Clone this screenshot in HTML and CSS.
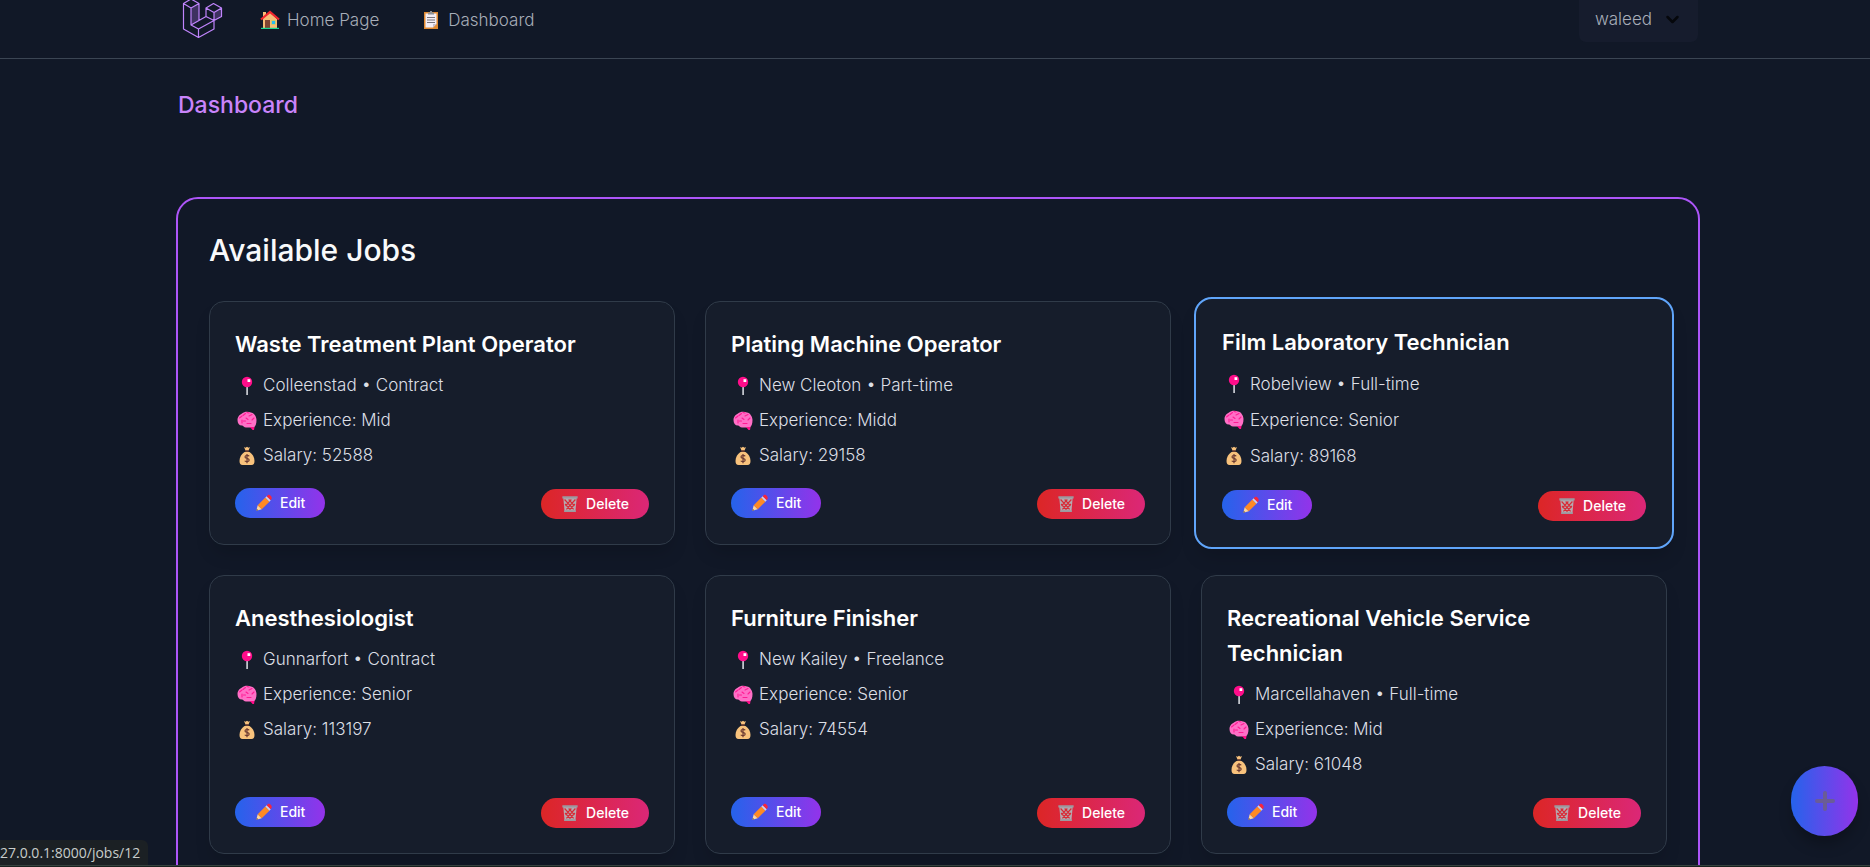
FILE: index.html
```html
<!DOCTYPE html>
<html lang="en">
<head>
<meta charset="utf-8">
<title>Dashboard</title>
<link rel="stylesheet" href="styles.css">
</head>
<body>
<svg class="sprite" aria-hidden="true">
  <symbol id="house" viewBox="0 0 20 20">
    <path fill="#f7bd78" d="M3 2h3v4l4-3.500L17 9v9H3z"/>
    <path fill="none" stroke="#f2252d" stroke-width="2.200" d="M1 9.500 10 2l9 7.500"/>
    <path fill="#7d4533" d="M5 10h5v8H5z"/>
    <path fill="#26bdf2" stroke="#f5d33c" stroke-width=".6" d="M11.500 10.500h4v4h-4z"/>
    <path fill="#16d890" d="M1 17.800h18V19H1z"/>
  </symbol>
  <symbol id="clipboard" viewBox="0 0 20 20">
    <path fill="#e08a32" d="M3 2h14v17H3z"/>
    <path fill="#f3eef6" d="M4.500 3.500h11V14L12 17.500H4.500z"/>
    <path fill="#c3bccb" d="M12 17.500V14h3.500z"/>
    <path fill="#8e9196" d="M7 2.500h2V1h2v1.500h2v2H7z"/>
    <path fill="none" stroke="#77747d" d="M6 7.500h8M6 10h8M6 12.500h8"/>
  </symbol>
  <symbol id="pin" viewBox="0 0 20 20">
    <path fill="#d5d7de" d="M9.300 9h1.600v10H9.300z"/>
    <circle cx="10" cy="6" r="5.200" fill="#ff0d8a"/>
    <path fill="#fff" d="M10.500 3.200h2.800V6h-2.800z"/>
  </symbol>
  <symbol id="brain" viewBox="0 0 20 20">
    <path fill="#ff6fc6" d="M.5 9C.5 5.500 3 3.500 5 2.500 7 .5 11 0 14 1.500c3 0 5.500 4.500 5.500 7.500 0 4-1 6-2.500 7.500H9c-2 0-3-2-4-2-3 0-4.500-2-4.500-5.500z"/>
    <path fill="#ff0d8a" d="M13 16h4.500l-.5 3h-1.500z"/>
    <path fill="none" stroke="#ff1d94" stroke-width="1.100" stroke-linecap="round" d="M2.500 7 5 5M5 9v3M6 4.500l2.500-2M10 1.500l2 .5M9 7l2 1.500M12 5l3-1.500M10 12.500h4M15 9l2-2M6.500 10h2"/>
  </symbol>
  <symbol id="bag" viewBox="0 0 20 20">
    <path fill="#f8c27c" d="M7 1l1.500.8L10 .7l1.500 1.100L13 1l-1.500 3.500h-3z"/>
    <path fill="#7a4634" d="M8.300 4.300h3.400v1.500H8.300z"/>
    <path fill="#f8c27c" d="M7.500 6h5c3 2 5 5 5 9 0 2.500-1 4-3 4h-9c-2 0-3-1.500-3-4 0-4 2-7 5-9z"/>
    <path fill="none" stroke="#6d3b32" stroke-width="1.200" d="M12.200 10.300C11.500 9.200 8 9 8 10.900s4.200 1.200 4.200 3.100S8.500 16 7.800 14.800M10 8v9.300"/>
  </symbol>
  <symbol id="pencil" viewBox="0 0 20 20">
    <path fill="#ffd79c" d="M1.500 18.500 3 12.500l4.500 4.500z"/>
    <path fill="#5d4a45" d="m1.500 18.500.5-2 1.500 1.500z"/>
    <path fill="#ff8a24" d="m3 12.500 8.500-8.500L16 8.500 7.500 17z"/>
    <path fill="#d6d4e4" d="m11.500 4 1.500-1.500L17.500 7 16 8.500z"/>
    <path fill="#f8253c" d="m13 2.500 1.500-1.500c2-.5 4.500 2 4 4L17.500 7z"/>
  </symbol>
  <symbol id="trash" viewBox="0 0 20 20">
    <path fill="#b5aab0" d="M2.500 2.500h15l-1.500 16H4z"/>
    <path fill="none" stroke="#d92b36" stroke-width="1.300" d="m4 5 10 11M8.500 5 15 12M4.500 10l5.500 6M16 5 6 16M11.500 5 5 12M15.500 10 10 16"/>
    <path fill="#9d999f" d="M1.500 1.500h17V4h-17zM3.500 17h13v2h-13z"/>
  </symbol>
</svg>

<nav class="nav">
  <div class="container nav-row">
    <a class="logo" href="#" aria-label="Laravel">
      <svg viewBox="4 -2 41 41" fill="none" stroke="#c084fc" stroke-width="1.200" stroke-linejoin="round">
        <path fill="#6b4a9a" fill-opacity=".5" stroke="none" d="M13 8l8-4.500V21l-8 4zM36 12.500 43.500 8v8.500L36 21z"/>
        <path d="M5.500 3.500 13-1l8 4.500L13 8zM5.500 3.500V29l15 8.500L36 29v-8.500M13 8v17l7.500 4v8.500M21 3.500V21M13 25l15-8.500M20.500 29 36 20.500M28 8l7.500-4.500L43.500 8 36 12.500zM28 8v8.500l8 4 7.500-4V8M36 12.500v8"/>
      </svg>
    </a>
    <a class="nav-link" href="#"><svg class="icon"><use href="#house"/></svg>Home Page</a>
    <a class="nav-link" href="#"><svg class="icon"><use href="#clipboard"/></svg>Dashboard</a>
    <button class="user" type="button">waleed
      <svg class="chevron" viewBox="0 0 12 12" fill="none" stroke="#05070b" stroke-width="2" stroke-linecap="round" stroke-linejoin="round"><path d="m2 4 4 4 4-4"/></svg>
    </button>
  </div>
</nav>

<header class="container page-head"><h1>Dashboard</h1></header>

<main class="container panel">
  <h2>Available Jobs</h2>
  <div class="grid">
    <article class="card">
      <h3>Waste Treatment Plant Operator</h3>
      <p><svg class="icon"><use href="#pin"/></svg>Colleenstad • Contract</p>
      <p><svg class="icon"><use href="#brain"/></svg>Experience: Mid</p>
      <p><svg class="icon"><use href="#bag"/></svg>Salary: 52588</p>
      <div class="actions">
        <a class="btn edit" href="#"><svg><use href="#pencil"/></svg>Edit</a>
        <button class="btn delete" type="button"><svg><use href="#trash"/></svg>Delete</button>
      </div>
    </article>
    <article class="card">
      <h3>Plating Machine Operator</h3>
      <p><svg class="icon"><use href="#pin"/></svg>New Cleoton • Part-time</p>
      <p><svg class="icon"><use href="#brain"/></svg>Experience: Midd</p>
      <p><svg class="icon"><use href="#bag"/></svg>Salary: 29158</p>
      <div class="actions">
        <a class="btn edit" href="#"><svg><use href="#pencil"/></svg>Edit</a>
        <button class="btn delete" type="button"><svg><use href="#trash"/></svg>Delete</button>
      </div>
    </article>
    <article class="card active">
      <h3>Film Laboratory Technician</h3>
      <p><svg class="icon"><use href="#pin"/></svg>Robelview • Full-time</p>
      <p><svg class="icon"><use href="#brain"/></svg>Experience: Senior</p>
      <p><svg class="icon"><use href="#bag"/></svg>Salary: 89168</p>
      <div class="actions">
        <a class="btn edit" href="#"><svg><use href="#pencil"/></svg>Edit</a>
        <button class="btn delete" type="button"><svg><use href="#trash"/></svg>Delete</button>
      </div>
    </article>
    <article class="card">
      <h3>Anesthesiologist</h3>
      <p><svg class="icon"><use href="#pin"/></svg>Gunnarfort • Contract</p>
      <p><svg class="icon"><use href="#brain"/></svg>Experience: Senior</p>
      <p><svg class="icon"><use href="#bag"/></svg>Salary: 113197</p>
      <div class="actions">
        <a class="btn edit" href="#"><svg><use href="#pencil"/></svg>Edit</a>
        <button class="btn delete" type="button"><svg><use href="#trash"/></svg>Delete</button>
      </div>
    </article>
    <article class="card">
      <h3>Furniture Finisher</h3>
      <p><svg class="icon"><use href="#pin"/></svg>New Kailey • Freelance</p>
      <p><svg class="icon"><use href="#brain"/></svg>Experience: Senior</p>
      <p><svg class="icon"><use href="#bag"/></svg>Salary: 74554</p>
      <div class="actions">
        <a class="btn edit" href="#"><svg><use href="#pencil"/></svg>Edit</a>
        <button class="btn delete" type="button"><svg><use href="#trash"/></svg>Delete</button>
      </div>
    </article>
    <article class="card">
      <h3>Recreational Vehicle Service Technician</h3>
      <p><svg class="icon"><use href="#pin"/></svg>Marcellahaven • Full-time</p>
      <p><svg class="icon"><use href="#brain"/></svg>Experience: Mid</p>
      <p><svg class="icon"><use href="#bag"/></svg>Salary: 61048</p>
      <div class="actions">
        <a class="btn edit" href="#"><svg><use href="#pencil"/></svg>Edit</a>
        <button class="btn delete" type="button"><svg><use href="#trash"/></svg>Delete</button>
      </div>
    </article>
  </div>
</main>

<button class="fab" type="button" aria-label="Add job">
  <svg viewBox="0 0 20 20" fill="none" stroke="#6a5c97" stroke-width="4" stroke-linecap="round"><path d="M10 2v16M2 10h16"/></svg>
</button>
<div class="status">27.0.0.1:8000/jobs/12</div>
<div class="edge"></div>
</body>
</html>
```
FILE: styles.css
```css
* { box-sizing: border-box; }

body {
  margin: 0;
  padding-left: 6px;
  height: 100vh;
  overflow: hidden;
  background: #111827;
  color: #fff;
  font-family: Inter, "Liberation Sans", sans-serif;
  font-size: 17px;
  font-weight: 300;
}

h1, h2, h3, p { margin: 0; }
a { color: inherit; text-decoration: none; }
button { border: 0; font: inherit; color: inherit; cursor: pointer; }
.sprite { position: absolute; width: 0; height: 0; }

.container {
  width: calc(100% - 48px);
  max-width: 1524px;
  margin: 0 auto;
}

.nav {
  margin-left: -6px;
  padding-left: 6px;
  height: 59px;
  border-bottom: 1px solid #3b4553;
}
.nav-row { display: flex; align-items: flex-start; padding-left: 6px; }
.logo { height: 39px; display: flex; align-items: flex-end; margin-right: 37px; overflow: hidden; }
.logo svg { width: 41px; height: 41px; flex: none; }
.nav-link {
  display: flex;
  align-items: center;
  gap: 7px;
  height: 40px;
  margin-right: 42px;
  color: #a7adb8;
}
.icon { width: 20px; height: 20px; flex: none; }
.user {
  display: flex;
  align-items: center;
  gap: 13px;
  height: 42px;
  margin: 0 2px 0 auto;
  padding: 0 18px 4px 16px;
  border-radius: 0 0 7px 7px;
  background: #161c2d;
  color: #a7adb8;
}
.chevron { width: 15px; height: 15px; }

.page-head { padding: 28px 2px 0; height: 138px; }
h1 { font-size: 23px; line-height: 36px; font-weight: 500; color: #c984fb; }

.panel {
  padding: 31px;
  border: 2px solid #ad55f8;
  border-radius: 22px;
}
h2 { font-size: 30px; line-height: 41px; font-weight: 500; color: #f9fafb; margin-bottom: 30px; }

.grid {
  display: grid;
  grid-template-columns: repeat(3, minmax(0, 1fr));
  gap: 30px;
}
.card {
  display: flex;
  flex-direction: column;
  padding: 25px;
  border: 1px solid #303b49;
  border-radius: 15px;
  background: #161d2b;
  box-shadow: 0 12px 18px -4px rgba(0, 0, 0, .15);
  line-height: 35px;
}
.card h3 { font-size: 22px; line-height: 35px; font-weight: 600; margin-bottom: 6px; }
.card p { display: flex; align-items: center; gap: 6px; padding-left: 2px; color: #dcdfe5; }

.card.active {
  margin: -4px -7px;
  padding: 26px;
  border: 2px solid #60a5fa;
  border-radius: 18px;
  line-height: 36px;
}

.actions { display: flex; justify-content: space-between; margin-top: auto; padding-top: 15px; }
.btn {
  display: flex;
  align-items: center;
  gap: 7px;
  height: 30px;
  padding: 0 20px;
  border-radius: 15px;
  font-size: 14px;
  font-weight: 500;
  line-height: 30px;
}
.btn svg { width: 18px; height: 18px; flex: none; }
.edit { background: linear-gradient(90deg, #2563eb, #9333ea); }
.delete { background: linear-gradient(90deg, #dc2626, #db2777); margin-top: 1px; }

.fab {
  position: fixed;
  right: 12px;
  bottom: 31px;
  width: 67px;
  height: 70px;
  display: grid;
  place-items: center;
  padding: 0;
  border-radius: 35px;
  background: linear-gradient(90deg, #2563eb, #9333ea);
  box-shadow: 0 10px 15px -3px rgba(0, 0, 0, .3);
}
.fab svg { width: 20px; height: 20px; }

.status {
  position: fixed;
  left: 0;
  bottom: 2px;
  padding: 0 8px 0 0;
  border-top-right-radius: 6px;
  background: #1b2024;
  color: #c8cdcb;
  font: 14px/25px "Open Sans", sans-serif;
}
.edge {
  position: fixed;
  left: 0;
  right: 0;
  bottom: 0;
  height: 2px;
  border-top: 1px solid #36423f;
  background: #18211f;
}
```
